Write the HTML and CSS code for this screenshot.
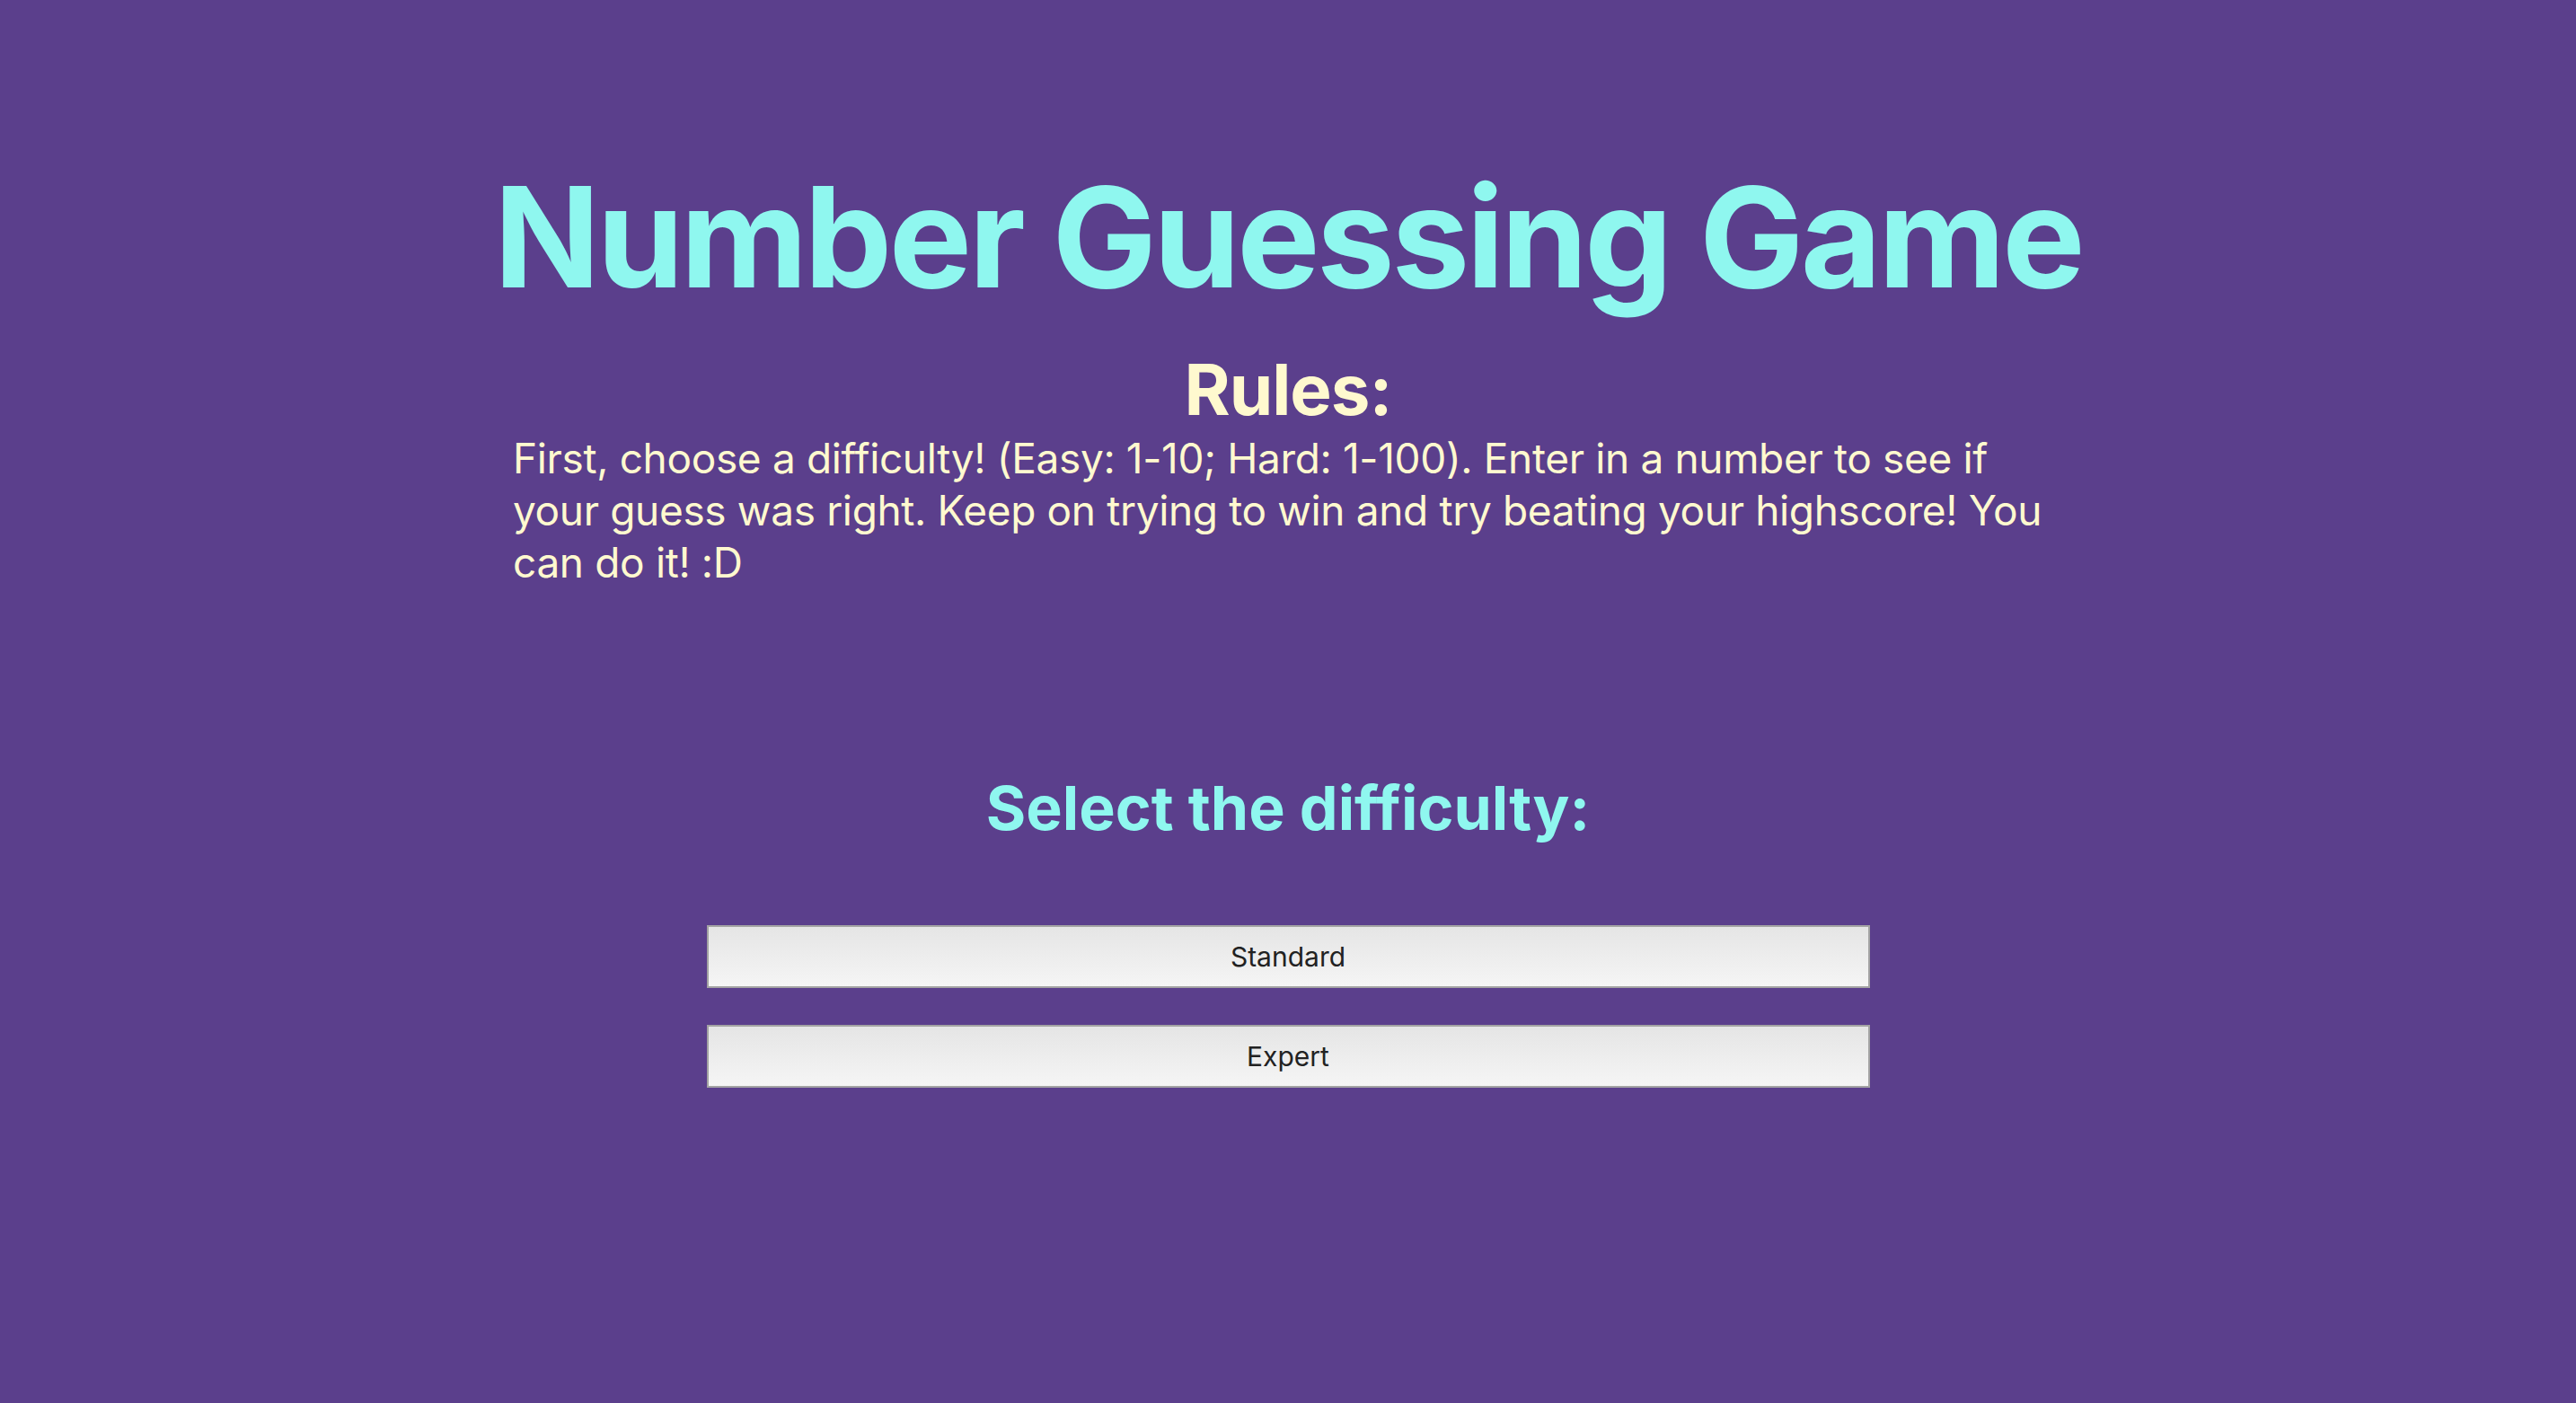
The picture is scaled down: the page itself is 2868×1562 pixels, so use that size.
FILE: index.html
```html
<!DOCTYPE html>
<html lang="en">
<head>
<meta charset="utf-8">
<title>Number Guessing Game</title>
<link rel="stylesheet" href="styles.css">
</head>
<body>
<main class="page">
  <h1 class="title">Number Guessing Game</h1>
  <section class="rules">
    <h2 class="rules-heading">Rules:</h2>
    <p class="rules-text">First, choose a difficulty! (Easy: 1-10; Hard: 1-100). Enter in a number to see if your guess was right. Keep on trying to win and try beating your highscore! You can do it! :D</p>
  </section>
  <section class="difficulty">
    <h2 class="difficulty-heading">Select the difficulty:</h2>
    <div class="buttons">
      <button class="btn" type="button">Standard</button>
      <button class="btn" type="button">Expert</button>
    </div>
  </section>
</main>
</body>
</html>
```

FILE: styles.css
```css
html, body {
  margin: 0;
  padding: 0;
}

body {
  background: #5b3f8c;
  font-family: Inter, "Noto Sans", "Liberation Sans", sans-serif;
  min-height: 1562px;
}

.page {
  padding-top: 171px;
  display: flex;
  flex-direction: column;
  align-items: center;
}

.title {
  margin: 0;
  font-size: 155px;
  line-height: 186px;
  font-weight: 700;
  color: #8ff7ef;
  text-align: center;
  letter-spacing: -3.5px;
  white-space: nowrap;
}

.rules {
  width: 1726px;
  margin-top: 30px;
}

.rules-heading {
  margin: 0;
  font-size: 78px;
  line-height: 94px;
  font-weight: 700;
  color: #fff9cf;
  text-align: center;
  letter-spacing: -1px;
}

.rules-text {
  margin: 0;
  font-size: 46px;
  line-height: 58px;
  font-weight: 400;
  color: #fff9cf;
  letter-spacing: -0.35px;
}

.difficulty {
  margin-top: 203px;
  width: 1726px;
  display: flex;
  flex-direction: column;
  align-items: center;
}

.difficulty-heading {
  margin: 0;
  font-size: 68px;
  line-height: 82px;
  font-weight: 700;
  color: #8ff7ef;
  text-align: center;
}

.buttons {
  margin-top: 90px;
  display: flex;
  flex-direction: column;
  gap: 41px;
}

.btn {
  width: 1295px;
  height: 70px;
  border: 2px solid #a3a3a3;
  border-radius: 0;
  background: linear-gradient(#e5e5e5, #f5f5f5);
  font-family: Inter, "Noto Sans", "Liberation Sans", sans-serif;
  font-size: 30px;
  color: #222222;
  padding: 0;
}
```
